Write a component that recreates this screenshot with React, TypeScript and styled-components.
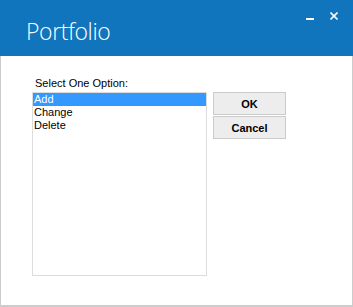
import React from "react";
import styled, { createGlobalStyle } from "styled-components";

const Global = createGlobalStyle`
  html, body { margin: 0; padding: 0; background: #ffffff; }
  * { box-sizing: border-box; }
`;

const Window = styled.div`
  width: 353px;
  height: 307px;
  display: flex;
  flex-direction: column;
  background: #ffffff;
  font-family: "Liberation Sans", Arial, sans-serif;
`;

const TitleBar = styled.div`
  height: 56px;
  flex: 0 0 56px;
  background: #1075bc;
  display: flex;
  align-items: flex-start;
`;

const Title = styled.div`
  padding: 16px 0 0 26px;
  font-family: "Open Sans", "Segoe UI", sans-serif;
  font-weight: 300;
  font-size: 23px;
  letter-spacing: -0.4px;
  line-height: 31px;
  color: #ffffff;
`;

const Controls = styled.div`
  margin-left: auto;
  display: flex;
  gap: 16px;
  padding: 12px 15px 0 0;
`;

const Body = styled.div`
  flex: 1;
  border: 1px solid #cccccc;
  border-top: none;
  border-bottom-width: 2px;
  padding: 21px 0 0 31px;
`;

const Label = styled.div`
  font-size: 11px;
  line-height: 13px;
  color: #000000;
  padding-left: 3px;
  margin-bottom: 2px;
`;

const Row = styled.div`
  display: flex;
  align-items: flex-start;
  gap: 6px;
`;

const ListBox = styled.div`
  width: 175px;
  height: 184px;
  border: 1px solid #dcdcdc;
  display: flex;
  flex-direction: column;
`;

const Item = styled.div<{ $selected?: boolean }>`
  height: 13px;
  font-size: 11px;
  line-height: 13px;
  padding-left: 1px;
  color: ${(p) => (p.$selected ? "#ffffff" : "#000000")};
  background: ${(p) => (p.$selected ? "#3399ff" : "transparent")};
`;

const Buttons = styled.div`
  display: flex;
  flex-direction: column;
  gap: 1px;
`;

const Button = styled.button`
  width: 73px;
  height: 23px;
  margin: 0;
  padding: 0;
  border: 1px solid #cbcbcb;
  background: #ededed;
  font-family: "Liberation Sans", Arial, sans-serif;
  font-weight: 700;
  font-size: 11px;
  color: #000000;
`;

export default function App() {
  return (
    <>
      <Global />
      <Window>
        <TitleBar>
          <Title>Portfolio</Title>
          <Controls>
            <svg width="8" height="8" viewBox="0 0 8 8">
              <rect x="0" y="6" width="8" height="2" fill="#ffffff" />
            </svg>
            <svg width="8" height="8" viewBox="0 0 8 8">
              <path d="M0.5 0.5 L7.5 7.5 M7.5 0.5 L0.5 7.5" stroke="#ffffff" strokeWidth="1.6" />
            </svg>
          </Controls>
        </TitleBar>
        <Body>
          <Label>Select One Option:</Label>
          <Row>
            <ListBox>
              <Item $selected>Add</Item>
              <Item>Change</Item>
              <Item>Delete</Item>
            </ListBox>
            <Buttons>
              <Button>OK</Button>
              <Button>Cancel</Button>
            </Buttons>
          </Row>
        </Body>
      </Window>
    </>
  );
}
